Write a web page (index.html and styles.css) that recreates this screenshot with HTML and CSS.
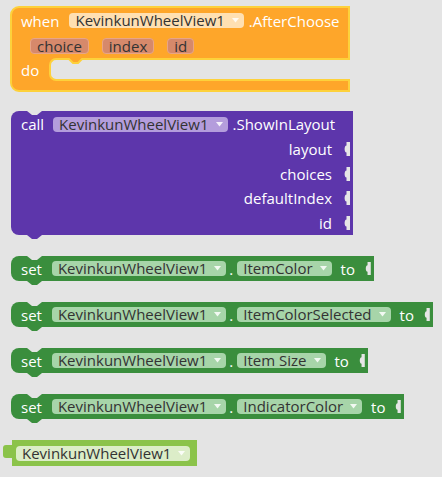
FILE: index.html
```html
<!DOCTYPE html>
<html>
<head>
<meta charset="utf-8">
<link rel="stylesheet" href="styles.css">
</head>
<body>
<div class="ws">

  <div class="blk event">
    <div class="row r1">
      <span class="lbl">when</span>
      <span class="dd dd-ev">KevinkunWheelView1<svg class="arr" viewBox="0 0 7 5"><path d="M0 0H7L3.5 4.5Z"/></svg></span>
      <span class="lbl after">.AfterChoose</span>
    </div>
    <div class="row r2">
      <span class="param">choice</span>
      <span class="param">index</span>
      <span class="param">id</span>
    </div>
    <div class="row r3">
      <span class="lbl do">do</span>
      <div class="mouth">
        <svg class="mnotch" viewBox="0 0 17 7"><path d="M1 0 L6 5 L11 5 L16 0"/></svg>
      </div>
    </div>
    <div class="arm"></div>
  </div>

  <div class="blk call">
    <svg class="ntop" viewBox="0 0 15 4"><path d="M0 0L5 4H10L15 0Z"/></svg>
    <div class="row r1">
      <span class="lbl">call</span>
      <span class="dd dd-call">KevinkunWheelView1<svg class="arr" viewBox="0 0 7 5"><path d="M0 0H7L3.5 4.5Z"/></svg></span>
      <span class="lbl meth">.ShowInLayout</span>
    </div>
    <div class="row in"><span class="lbl">layout</span><svg class="hole" viewBox="0 0 6 14"><path d="M6 0H2.5V3.5C0 3.5 0 10.5 2.5 10.5V14H6Z"/></svg></div>
    <div class="row in"><span class="lbl">choices</span><svg class="hole" viewBox="0 0 6 14"><path d="M6 0H2.5V3.5C0 3.5 0 10.5 2.5 10.5V14H6Z"/></svg></div>
    <div class="row in"><span class="lbl">defaultIndex</span><svg class="hole" viewBox="0 0 6 14"><path d="M6 0H2.5V3.5C0 3.5 0 10.5 2.5 10.5V14H6Z"/></svg></div>
    <div class="row in last"><span class="lbl">id</span><svg class="hole" viewBox="0 0 6 14"><path d="M6 0H2.5V3.5C0 3.5 0 10.5 2.5 10.5V14H6Z"/></svg></div>
    <svg class="nbot" viewBox="0 0 15 4"><path d="M0 0L5 4H10L15 0Z"/></svg>
  </div>

  <div class="blk set">
    <svg class="ntop" viewBox="0 0 15 4"><path d="M0 0L5 4H10L15 0Z"/></svg>
    <span class="lbl">set</span>
    <span class="dd dd-set first">KevinkunWheelView1<svg class="arr" viewBox="0 0 7 5"><path d="M0 0H7L3.5 4.5Z"/></svg></span>
    <span class="lbl dot">.</span>
    <span class="dd dd-set">ItemColor<svg class="arr" viewBox="0 0 7 5"><path d="M0 0H7L3.5 4.5Z"/></svg></span>
    <span class="lbl to">to</span>
    <svg class="hole sh" viewBox="0 0 6 14"><path d="M6 0H2.5V3.5C0 3.5 0 10.5 2.5 10.5V14H6Z"/></svg>
    <svg class="nbot" viewBox="0 0 15 4"><path d="M0 0L5 4H10L15 0Z"/></svg>
  </div>

  <div class="blk set">
    <svg class="ntop" viewBox="0 0 15 4"><path d="M0 0L5 4H10L15 0Z"/></svg>
    <span class="lbl">set</span>
    <span class="dd dd-set first">KevinkunWheelView1<svg class="arr" viewBox="0 0 7 5"><path d="M0 0H7L3.5 4.5Z"/></svg></span>
    <span class="lbl dot">.</span>
    <span class="dd dd-set">ItemColorSelected<svg class="arr" viewBox="0 0 7 5"><path d="M0 0H7L3.5 4.5Z"/></svg></span>
    <span class="lbl to">to</span>
    <svg class="hole sh" viewBox="0 0 6 14"><path d="M6 0H2.5V3.5C0 3.5 0 10.5 2.5 10.5V14H6Z"/></svg>
    <svg class="nbot" viewBox="0 0 15 4"><path d="M0 0L5 4H10L15 0Z"/></svg>
  </div>

  <div class="blk set">
    <svg class="ntop" viewBox="0 0 15 4"><path d="M0 0L5 4H10L15 0Z"/></svg>
    <span class="lbl">set</span>
    <span class="dd dd-set first">KevinkunWheelView1<svg class="arr" viewBox="0 0 7 5"><path d="M0 0H7L3.5 4.5Z"/></svg></span>
    <span class="lbl dot">.</span>
    <span class="dd dd-set">Item Size<svg class="arr" viewBox="0 0 7 5"><path d="M0 0H7L3.5 4.5Z"/></svg></span>
    <span class="lbl to">to</span>
    <svg class="hole sh" viewBox="0 0 6 14"><path d="M6 0H2.5V3.5C0 3.5 0 10.5 2.5 10.5V14H6Z"/></svg>
    <svg class="nbot" viewBox="0 0 15 4"><path d="M0 0L5 4H10L15 0Z"/></svg>
  </div>

  <div class="blk set">
    <svg class="ntop" viewBox="0 0 15 4"><path d="M0 0L5 4H10L15 0Z"/></svg>
    <span class="lbl">set</span>
    <span class="dd dd-set first">KevinkunWheelView1<svg class="arr" viewBox="0 0 7 5"><path d="M0 0H7L3.5 4.5Z"/></svg></span>
    <span class="lbl dot">.</span>
    <span class="dd dd-set">IndicatorColor<svg class="arr" viewBox="0 0 7 5"><path d="M0 0H7L3.5 4.5Z"/></svg></span>
    <span class="lbl to">to</span>
    <svg class="hole sh" viewBox="0 0 6 14"><path d="M6 0H2.5V3.5C0 3.5 0 10.5 2.5 10.5V14H6Z"/></svg>
    <svg class="nbot" viewBox="0 0 15 4"><path d="M0 0L5 4H10L15 0Z"/></svg>
  </div>

  <div class="blk comp">
    <svg class="otab" viewBox="0 0 9 13"><path d="M9 0H3C1 0 0 1 0 3V10C0 12 1 13 3 13H9Z"/></svg>
    <span class="dd dd-comp">KevinkunWheelView1<svg class="arr" viewBox="0 0 7 5"><path d="M0 0H7L3.5 4.5Z"/></svg></span>
  </div>

</div>
</body>
</html>
```

FILE: styles.css
```css
* { box-sizing: border-box; }
html, body { margin: 0; padding: 0; }
body {
  background: #e4e4e4;
  font-family: "Open Sans", "Noto Sans", sans-serif;
  font-size: 15px;
  width: 442px;
  height: 477px;
  overflow: hidden;
}
.ws {
  display: flex;
  flex-direction: column;
  align-items: flex-start;
  padding: 6px 0 0 9px;
}
.blk { position: relative; color: #fff; }
.lbl { white-space: nowrap; line-height: 18px; }
.row { display: flex; align-items: center; white-space: nowrap; }

/* dropdown pills */
.dd {
  display: inline-flex;
  align-items: center;
  height: 15px;
  line-height: 15px;
  padding: 0 5px 0 6px;
  border-radius: 4px;
  color: #333;
  white-space: nowrap;
}
.arr { width: 7px; height: 5px; margin-left: 7px; fill: rgba(255,255,255,0.85); }

/* event block */
.event {
  margin-left: 1px;
  width: 340px;
  background: #fea62a;
  border: 2px solid #fdd13b;
  border-radius: 9px 0 0 9px;
}
.event .r1 { height: 25px; padding-left: 9px; }
.dd-ev { background: #ffe0b2; margin-left: 10px; }
.after { margin-left: 5px; }
.event .r2 { height: 25px; padding-left: 18px; gap: 13px; }
.param {
  height: 16px;
  line-height: 14px;
  padding: 0 6px;
  border: 1px solid #e8a587;
  background: #d6896b;
  border-radius: 4px;
  color: #333;
}
.event .r3 { height: 23px; padding-left: 9px; align-items: stretch; }
.do { width: 28px; display: flex; align-items: center; }
.mouth {
  position: relative;
  flex: 1;
  margin-right: -2px;
  background: #e4e4e4;
  border: 2px solid #fdd13b;
  border-right: none;
  border-radius: 7px 0 0 7px;
}
.mnotch {
  position: absolute;
  left: 16px;
  top: -2px;
  width: 17px;
  height: 7px;
  fill: #fea62a;
  stroke: #fdd13b;
  stroke-width: 2;
}
.arm { height: 9px; }

/* notches */
.ntop {
  position: absolute;
  left: 16px;
  top: 0;
  width: 15px;
  height: 4px;
  fill: #e4e4e4;
}
.nbot {
  position: absolute;
  left: 16px;
  bottom: -4px;
  width: 15px;
  height: 4px;
}
.hole { width: 6px; height: 14px; fill: #e6e6e6; flex: none; }

/* call block */
.call {
  margin: 19px 0 0 2px;
  width: 342px;
  background: #5d36ab;
  border-radius: 8px 0 0 8px;
}
.call .nbot { fill: #5d36ab; }
.call .r1 { height: 26px; padding-left: 10px; }
.dd-call { background: #b49ddc; margin-left: 9px; }
.meth { margin-left: 5px; }
.call .in { height: 24.5px; justify-content: flex-end; padding-right: 3px; }
.call .in .hole { margin-left: 12px; }

/* set blocks */
.set {
  margin: 21px 0 0 2px;
  height: 25px;
  display: flex;
  align-items: center;
  padding: 0 3px 0 10px;
  background: #3a8e3d;
  border-radius: 8px 0 0 8px;
}
.set + .set { margin-top: 21px; }
.set .nbot { fill: #3a8e3d; }
.dd-set { background: #a7d5a9; margin-left: 4px; }
.dd-set.first { margin-left: 10px; }
.dot { margin-left: 3px; }
.to { margin-left: 9px; }
.hole.sh { margin-left: 10px; height: 13px; }

/* component block */
.comp {
  margin: 21px 0 0 3px;
  height: 26px;
  display: flex;
  align-items: center;
  padding: 0 7px 0 4px;
  background: #8bc34a;
}
.otab {
  position: absolute;
  left: -9px;
  top: 5px;
  width: 9px;
  height: 13px;
  fill: #8bc34a;
}
.dd-comp { background: #dcedc8; }
```
